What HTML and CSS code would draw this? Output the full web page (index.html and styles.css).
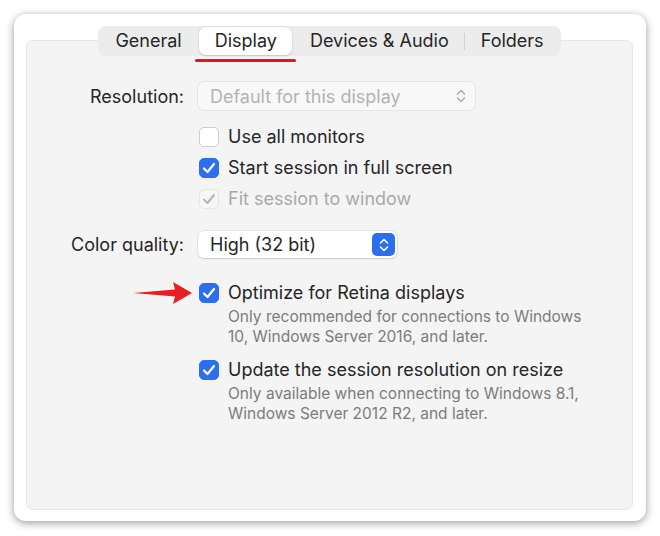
FILE: index.html
```html
<!DOCTYPE html>
<html>
<head>
    <title>Display Preferences</title>
    <link rel="stylesheet" href="styles.css">
</head>
<body>
    <div class="window">
        <div class="tabs">
            <div class="tab">General</div>
            <div class="tab active">Display<span class="mark"></span></div>
            <div class="tab">Devices &amp; Audio</div>
            <div class="sep"></div>
            <div class="tab">Folders</div>
        </div>

        <div class="panel">
            <div class="row res-row">
                <div class="label">Resolution:</div>
                <div class="popup disabled">
                    <span>Default for this display</span>
                    <svg class="chev" width="10" height="14" viewBox="0 0 10 14"><path d="M1.5 5 L5 1.5 L8.5 5 M1.5 9 L5 12.5 L8.5 9" fill="none" stroke="#a9a9a9" stroke-width="1.5" stroke-linecap="round" stroke-linejoin="round"/></svg>
                </div>
            </div>

            <div class="checks">
                <div class="check">
                    <span class="box"></span>
                    <span class="text">Use all monitors</span>
                </div>
                <div class="check">
                    <span class="box on"><svg width="14" height="12" viewBox="0 0 14 12"><path d="M2 6.5 L5.5 10 L12 2" fill="none" stroke="#fff" stroke-width="2.2" stroke-linecap="round" stroke-linejoin="round"/></svg></span>
                    <span class="text">Start session in full screen</span>
                </div>
                <div class="check off">
                    <span class="box dim"><svg width="14" height="12" viewBox="0 0 14 12"><path d="M2 6.5 L5.5 10 L12 2" fill="none" stroke="#b4b4b4" stroke-width="2" stroke-linecap="round" stroke-linejoin="round"/></svg></span>
                    <span class="text">Fit session to window</span>
                </div>
            </div>

            <div class="row color-row">
                <div class="label">Color quality:</div>
                <div class="popup">
                    <span>High (32 bit)</span>
                    <span class="stepper"><svg width="10" height="14" viewBox="0 0 10 14"><path d="M1.5 5 L5 1.5 L8.5 5 M1.5 9 L5 12.5 L8.5 9" fill="none" stroke="#fff" stroke-width="1.6" stroke-linecap="round" stroke-linejoin="round"/></svg></span>
                </div>
            </div>

            <div class="options">
                <div class="option">
                    <span class="box on"><svg width="14" height="12" viewBox="0 0 14 12"><path d="M2 6.5 L5.5 10 L12 2" fill="none" stroke="#fff" stroke-width="2.2" stroke-linecap="round" stroke-linejoin="round"/></svg>
                        <svg class="arrow" width="60" height="24" viewBox="0 0 60 24"><path d="M0 12 L42 8.5 L40 1 L59 12 L40 23 L42 15.5 Z" fill="#ea1d22"/></svg>
                    </span>
                    <div>
                        <div class="text">Optimize for Retina displays</div>
                        <div class="note">Only recommended for connections to Windows<br>10, Windows Server 2016, and later.</div>
                    </div>
                </div>
                <div class="option">
                    <span class="box on"><svg width="14" height="12" viewBox="0 0 14 12"><path d="M2 6.5 L5.5 10 L12 2" fill="none" stroke="#fff" stroke-width="2.2" stroke-linecap="round" stroke-linejoin="round"/></svg></span>
                    <div>
                        <div class="text">Update the session resolution on resize</div>
                        <div class="note">Only available when connecting to Windows 8.1,<br>Windows Server 2012 R2, and later.</div>
                    </div>
                </div>
            </div>
        </div>
    </div>
</body>
</html>
```

FILE: styles.css
```css
body {
    margin: 0;
    padding: 14px 14px 15px 14px;
    background-color: #fff;
    font-family: Inter, "Liberation Sans", sans-serif;
    color: #262626;
}

.window {
    height: 507px;
    box-sizing: border-box;
    background-color: #fff;
    border-radius: 12px;
    box-shadow: 0 2px 9px rgba(0,0,0,0.4);
    padding: 12px 13px 11px 12px;
    display: flex;
    flex-direction: column;
}

.tabs {
    align-self: center;
    display: flex;
    align-items: center;
    height: 30px;
    padding: 0 2px;
    background-color: #ececec;
    border-radius: 8px;
    margin-bottom: -16px;
    position: relative;
    z-index: 1;
    font-size: 18px;
}

.tab {
    position: relative;
    height: 28px;
    line-height: 28px;
    padding: 0 15.5px;
    border-radius: 7px;
}

.tab.active {
    background-color: #fff;
    box-shadow: 0 0.5px 2px rgba(0,0,0,0.18);
    margin: 0 2px;
}

.mark {
    position: absolute;
    left: -4px;
    right: -4px;
    top: 32px;
    height: 3px;
    border-radius: 2px;
    background-color: #e3151b;
}

.sep {
    width: 1px;
    height: 17px;
    background-color: #d2d2d2;
}

.panel {
    flex: 1;
    background-color: #f4f4f4;
    border: 1px solid #e6e6e6;
    border-radius: 7px;
    padding-top: 41px;
}

.row {
    display: flex;
    align-items: center;
    font-size: 18px;
}

.label {
    width: 157px;
    text-align: right;
    margin-right: 14px;
}

.popup {
    display: flex;
    align-items: center;
    justify-content: space-between;
    box-sizing: border-box;
    height: 28px;
    padding: 0 2px 0 12px;
    background-color: #fff;
    border-radius: 6px;
    box-shadow: 0 0 0 0.5px rgba(0,0,0,0.12), 0 1px 1.5px rgba(0,0,0,0.12);
}

.popup.disabled {
    width: 277px;
    padding-right: 9px;
    background-color: #f8f8f8;
    color: #b3b3b3;
    box-shadow: 0 0 0 1px #e5e5e5;
}

.color-row {
    margin-top: 17px;
}

.color-row .popup {
    width: 199px;
    height: 27px;
}

.stepper {
    width: 23px;
    height: 23px;
    border-radius: 5px;
    background-color: #2b6ff0;
    display: flex;
    align-items: center;
    justify-content: center;
}

.checks {
    margin: 11px 0 0 172px;
}

.check {
    display: flex;
    align-items: center;
    height: 31px;
    font-size: 18px;
}

.check.off {
    color: #a9a9a9;
}

.box {
    position: relative;
    flex: none;
    width: 20px;
    height: 20px;
    box-sizing: border-box;
    border-radius: 5px;
    margin-right: 9px;
    background-color: #fff;
    border: 1px solid #cdcdcd;
    display: flex;
    align-items: center;
    justify-content: center;
}

.box.on {
    background-color: #2b6ff0;
    border-color: #2b6ff0;
}

.box.dim {
    background-color: #f6f6f6;
    border-color: #e6e6e6;
}

.options {
    margin: 23px 0 0 172px;
}

.option {
    display: flex;
    align-items: flex-start;
    margin-bottom: 11px;
}

.option .box {
    margin-top: 2px;
}

.option .text {
    font-size: 18px;
    line-height: 24px;
}

.note {
    margin-top: 2px;
    font-size: 15.5px;
    line-height: 20px;
    color: #7c7c7c;
}

.arrow {
    position: absolute;
    left: -67px;
    top: -3px;
}
```
